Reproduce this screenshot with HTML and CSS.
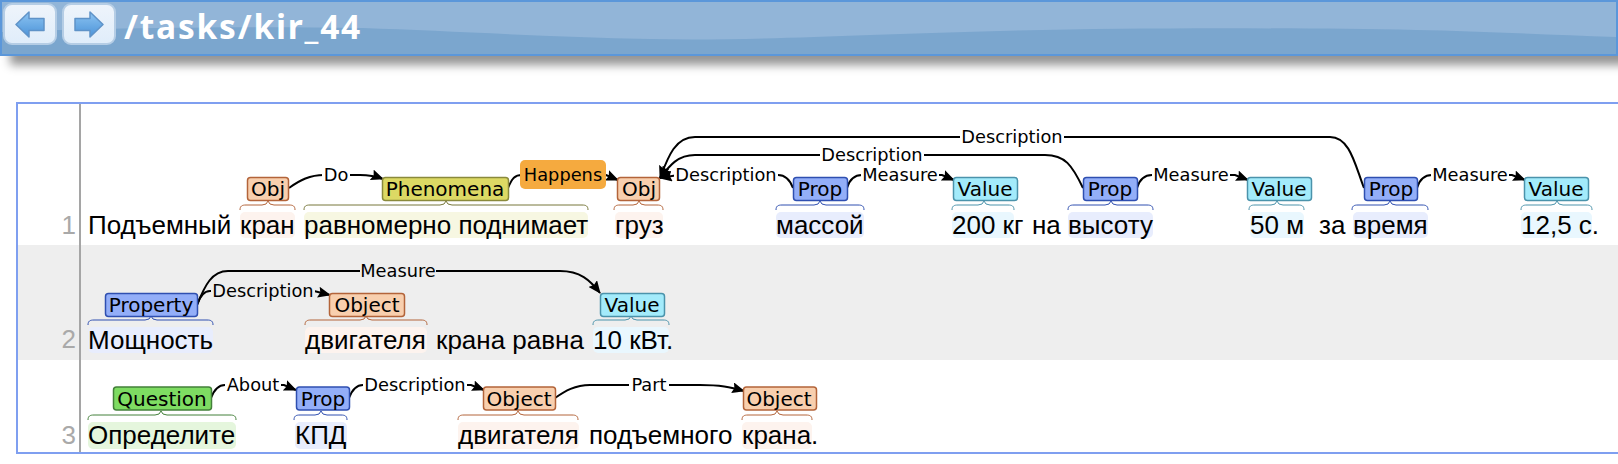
FILE: index.html
```html
<!DOCTYPE html>
<html lang="ru">
<head>
<meta charset="utf-8">
<title>/tasks/kir_44</title>
<link rel="stylesheet" href="styles.css">
</head>
<body>
<header class="bar">
  <svg class="gloss" viewBox="0 0 1618 52" preserveAspectRatio="none" aria-hidden="true"><path class="gloss-shape" d="M0 0H1618V35C1550 33 1480 29 1418 28 1300 26 1150 25 1000 29 850 33 750 39 650 37 550 35 450 29 362 26 240 24 100 26 0 30z"/></svg>
  <button class="nav" aria-label="back"><svg width="30" height="27" viewBox="0 0 30 27"><defs><linearGradient id="ag" x1="0" y1="0" x2="0" y2="1"><stop offset="0" stop-color="#8cc4f2"/><stop offset="1" stop-color="#4c93d8"/></linearGradient></defs><path class="arrow" d="M1 13.500 14 1v6.500h15v12H14V26z"/></svg></button>
  <button class="nav" aria-label="forward"><svg width="30" height="27" viewBox="0 0 30 27"><path class="arrow" d="M29 13.500 16 1v6.500H1v12h15V26z"/></svg></button>
  <h1 class="title">/tasks/kir_44</h1>
</header>
<main class="frame">
  <section class="row">
    <div class="num n1">1</div>
    <svg class="sent h1" viewBox="81 104 1537 141">
      <defs>
        <marker id="ah" markerWidth="13" markerHeight="11" refX="12" refY="5.500" orient="auto" markerUnits="userSpaceOnUse"><path d="M0 0 13 5.500 0 11 2 5.500z"/></marker>
      </defs>
      <rect class="hl o" x="240" y="212" width="55" height="26" rx="5"/>
      <rect class="hl y" x="304" y="212" width="284" height="26" rx="5"/>
      <rect class="hl o" x="615" y="212" width="48" height="26" rx="5"/>
      <rect class="hl b" x="776" y="212" width="88" height="26" rx="5"/>
      <rect class="hl c" x="952" y="212" width="62" height="26" rx="5"/>
      <rect class="hl b" x="1068" y="212" width="85" height="26" rx="5"/>
      <rect class="hl c" x="1250" y="212" width="54" height="26" rx="5"/>
      <rect class="hl b" x="1353" y="212" width="75" height="26" rx="5"/>
      <rect class="hl c" x="1521" y="212" width="71" height="26" rx="5"/>

      <path class="arc" d="M1364 188C1355 165 1350 137 1330 137H695C675 137 668 157 660 178" marker-end="url(#ah)"/>
      <path class="arc" d="M1083 188C1072 165 1065 155 1045 155H695C678 155 670 165 660 178" marker-end="url(#ah)"/>
      <path class="arc" d="M847 188C850 178 855 175 862 175H942L954 180" marker-end="url(#ah)"/>
      <path class="arc" d="M793 188C790 180 785 175 778 175H678L660 178" marker-end="url(#ah)"/>
      <path class="arc" d="M289 188C300 180 310 175 324 175H360C368 175 375 176 383 179" marker-end="url(#ah)"/>
      <path class="arc" d="M508 188C512 178 515 175 522 175H606L618 180" marker-end="url(#ah)"/>
      <path class="arc" d="M1137 188C1140 178 1145 175 1152 175H1235L1248 180" marker-end="url(#ah)"/>
      <path class="arc" d="M1417 188C1420 178 1425 175 1432 175H1512L1525 180" marker-end="url(#ah)"/>

      <rect class="gap" x="960" y="128" width="104" height="18"/><text class="lab" x="1012" y="136.500">Description</text>
      <rect class="gap" x="820" y="146" width="104" height="18"/><text class="lab" x="872" y="154.500">Description</text>
      <rect class="gap" x="674" y="166" width="104" height="18"/><text class="lab" x="726" y="174.500">Description</text>
      <rect class="gap" x="861" y="166" width="78" height="18"/><text class="lab" x="900" y="174.500">Measure</text>
      <rect class="gap" x="1152" y="166" width="78" height="18"/><text class="lab" x="1191" y="174.500">Measure</text>
      <rect class="gap" x="1431" y="166" width="78" height="18"/><text class="lab" x="1470" y="174.500">Measure</text>
      <rect class="gap" x="322" y="166" width="28" height="18"/><text class="lab" x="336" y="174.500">Do</text>

      <rect class="box bo" x="247.500" y="177.500" width="41" height="23" rx="3"/><text class="tag" x="268" y="189">Obj</text>
      <rect class="box by" x="382.500" y="177.500" width="126" height="23" rx="3"/><text class="tag" x="445" y="189">Phenomena</text>
      <rect class="box bg" x="520" y="160" width="86" height="29" rx="5"/><text class="lab" x="563" y="174.500">Happens</text>
      <rect class="box bo" x="617.500" y="177.500" width="42" height="23" rx="3"/><text class="tag" x="639" y="189">Obj</text>
      <rect class="box bb" x="793.500" y="177.500" width="54" height="23" rx="3"/><text class="tag" x="820" y="189">Prop</text>
      <rect class="box bc" x="953.500" y="177.500" width="64" height="23" rx="3"/><text class="tag" x="985" y="189">Value</text>
      <rect class="box bb" x="1083.500" y="177.500" width="54" height="23" rx="3"/><text class="tag" x="1110" y="189">Prop</text>
      <rect class="box bc" x="1247.500" y="177.500" width="64" height="23" rx="3"/><text class="tag" x="1279" y="189">Value</text>
      <rect class="box bb" x="1364.500" y="177.500" width="53" height="23" rx="3"/><text class="tag" x="1391" y="189">Prop</text>
      <rect class="box bc" x="1524.500" y="177.500" width="64" height="23" rx="3"/><text class="tag" x="1556" y="189">Value</text>

      <path class="brace so" d="M240 210C240 206 242 205 246 205H262Q267 205 268 201Q269 205 274 205H289C293 205 295 206 295 210"/>
      <path class="brace sy" d="M304 210C304 206 306 205 310 205H440Q445 205 446 201Q447 205 452 205H582C586 205 588 206 588 210"/>
      <path class="brace so" d="M614 210C614 206 616 205 620 205H633Q638 205 639 201Q640 205 645 205H657C661 205 663 206 663 210"/>
      <path class="brace sb" d="M776 210C776 206 778 205 782 205H814Q819 205 820 201Q821 205 826 205H858C862 205 864 206 864 210"/>
      <path class="brace sc" d="M952 210C952 206 954 205 958 205H978Q983 205 984 201Q985 205 990 205H1008C1012 205 1014 206 1014 210"/>
      <path class="brace sb" d="M1068 210C1068 206 1070 205 1074 205H1105Q1110 205 1111 201Q1112 205 1117 205H1147C1151 205 1153 206 1153 210"/>
      <path class="brace sc" d="M1249 210C1249 206 1251 205 1255 205H1271Q1276 205 1277 201Q1278 205 1283 205H1298C1302 205 1304 206 1304 210"/>
      <path class="brace sb" d="M1352 210C1352 206 1354 205 1358 205H1384Q1389 205 1390 201Q1391 205 1396 205H1422C1426 205 1428 206 1428 210"/>
      <path class="brace sc" d="M1521 210C1521 206 1523 205 1527 205H1551Q1556 205 1557 201Q1558 205 1563 205H1586C1590 205 1592 206 1592 210"/>

      <text class="word" x="88" y="234">Подъемный</text>
      <text class="word" x="240" y="234">кран</text>
      <text class="word" x="304" y="234">равномерно поднимает</text>
      <text class="word" x="615" y="234">груз</text>
      <text class="word" x="776" y="234">массой</text>
      <text class="word" x="952" y="234">200 кг</text>
      <text class="word" x="1032" y="234">на</text>
      <text class="word" x="1068" y="234">высоту</text>
      <text class="word" x="1250" y="234">50 м</text>
      <text class="word" x="1319" y="234">за</text>
      <text class="word" x="1353" y="234">время</text>
      <text class="word" x="1521" y="234">12,5 с.</text>
    </svg>
  </section>
  <section class="row alt">
    <div class="num n2">2</div>
    <svg class="sent h2" viewBox="81 245 1537 115">
      <rect class="hl b" x="88" y="327" width="125" height="26" rx="5"/>
      <rect class="hl o" x="305" y="327" width="122" height="26" rx="5"/>
      <rect class="hl c" x="593" y="327" width="76" height="26" rx="5"/>

      <path class="arc" d="M197 305C205 285 212 271 228 271H560C580 271 590 280 600 293" marker-end="url(#ah)"/>
      <path class="arc" d="M197 305C200 296 204 291 210 291H314L330 295" marker-end="url(#ah)"/>
      <rect class="gap altgap" x="360" y="262" width="76" height="18"/><text class="lab" x="398" y="270.500">Measure</text>
      <rect class="gap altgap" x="211" y="282" width="104" height="18"/><text class="lab" x="263" y="290.500">Description</text>

      <rect class="box bb" x="105.500" y="293.500" width="92" height="23" rx="3"/><text class="tag" x="151" y="305">Property</text>
      <rect class="box bo" x="329.500" y="293.500" width="75" height="23" rx="3"/><text class="tag" x="367" y="305">Object</text>
      <rect class="box bc" x="600.500" y="293.500" width="64" height="23" rx="3"/><text class="tag" x="632" y="305">Value</text>

      <path class="brace sb" d="M88 325C88 321 90 320 94 320H145Q150 320 151 316Q152 320 157 320H207C211 320 213 321 213 325"/>
      <path class="brace so" d="M305 325C305 321 307 320 311 320H360Q365 320 366 316Q367 320 372 320H421C425 320 427 321 427 325"/>
      <path class="brace sc" d="M593 325C593 321 595 320 599 320H625Q630 320 631 316Q632 320 637 320H663C667 320 669 321 669 325"/>

      <text class="word" x="88" y="348.500">Мощность</text>
      <text class="word" x="305" y="348.500">двигателя</text>
      <text class="word" x="436" y="348.500">крана равна</text>
      <text class="word" x="593" y="348.500">10 кВт.</text>
    </svg>
  </section>
  <section class="row">
    <div class="num n3">3</div>
    <svg class="sent h3" viewBox="81 360 1537 92">
      <rect class="hl g" x="88" y="422" width="148" height="27" rx="5"/>
      <rect class="hl b" x="295" y="422" width="52" height="27" rx="5"/>
      <rect class="hl o" x="458" y="422" width="121" height="27" rx="5"/>
      <rect class="hl o" x="742" y="422" width="70" height="27" rx="5"/>

      <path class="arc" d="M211 398C214 390 218 385 225 385H284L296 390" marker-end="url(#ah)"/>
      <path class="arc" d="M349 398C352 390 356 385 363 385H471L484 390" marker-end="url(#ah)"/>
      <path class="arc" d="M555 398C565 391 575 385 590 385H700C720 385 730 387 744 391" marker-end="url(#ah)"/>
      <rect class="gap" x="225" y="376" width="56" height="18"/><text class="lab" x="253" y="384.500">About</text>
      <rect class="gap" x="363" y="376" width="104" height="18"/><text class="lab" x="415" y="384.500">Description</text>
      <rect class="gap" x="629" y="376" width="40" height="18"/><text class="lab" x="649" y="384.500">Part</text>

      <rect class="box bg2" x="113.500" y="387" width="98" height="23" rx="3"/><text class="tag" x="162" y="398.500">Question</text>
      <rect class="box bb" x="296.500" y="387" width="53" height="23" rx="3"/><text class="tag" x="323" y="398.500">Prop</text>
      <rect class="box bo" x="483.500" y="387" width="72" height="23" rx="3"/><text class="tag" x="519" y="398.500">Object</text>
      <rect class="box bo" x="743.500" y="387" width="73" height="23" rx="3"/><text class="tag" x="779" y="398.500">Object</text>

      <path class="brace sg" d="M88 420C88 416 90 415 94 415H155Q160 415 161 411Q162 415 167 415H230C234 415 236 416 236 420"/>
      <path class="brace sb" d="M294 420C294 416 296 415 300 415H315Q320 415 321 411Q322 415 327 415H341C345 415 347 416 347 420"/>
      <path class="brace so" d="M458 420C458 416 460 415 464 415H512Q517 415 518 411Q519 415 524 415H572C576 415 578 416 578 420"/>
      <path class="brace so" d="M742 420C742 416 744 415 748 415H771Q776 415 777 411Q778 415 783 415H806C810 415 812 416 812 420"/>

      <text class="word" x="88" y="444">Определите</text>
      <text class="word" x="295" y="444">КПД</text>
      <text class="word" x="458" y="444">двигателя</text>
      <text class="word" x="589" y="444">подъемного</text>
      <text class="word" x="742" y="444">крана.</text>
    </svg>
  </section>
</main>
</body>
</html>
```
FILE: styles.css
```css
* { box-sizing: border-box; }
html, body { margin: 0; padding: 0; background: #fff; }
body { width: 1618px; height: 464px; overflow: hidden; font-family: "Liberation Sans", sans-serif; }

.bar {
  position: relative;
  height: 56px;
  display: flex;
  align-items: flex-start;
  gap: 5px;
  padding: 1px;
  border: 2px solid #5b97da;
  background: #7ba6ce;
  box-shadow: 10px 9px 9px rgba(0, 0, 0, 0.42);
}
.gloss { position: absolute; left: 0; top: 0; width: 100%; height: 100%; }
.gloss-shape { fill: #92b5d8; }
.nav {
  position: relative;
  width: 54px;
  height: 42px;
  padding: 0;
  display: flex;
  align-items: center;
  justify-content: center;
  border: 2px solid #b5cde5;
  border-radius: 9px;
  background: linear-gradient(#eef4fb, #e0edfa);
}
.arrow { fill: url(#ag); stroke: #5f93c8; stroke-width: 1.500; stroke-linejoin: round; }
.title {
  position: relative;
  margin: 0 0 0 3px;
  color: #fff;
  font: bold 33.500px/46px "Noto Sans", sans-serif;
  letter-spacing: 1.800px;
}

.frame {
  margin: 46px 0 0 16px;
  width: 1602px;
  height: 352px;
  border: 2px solid #7f9ff0;
  border-right: 0;
}
.row { display: flex; }
.alt { background: #eee; }
.num {
  width: 63px;
  flex: none;
  border-right: 2px solid #a5a5a5;
  padding-right: 3px;
  display: flex;
  align-items: flex-end;
  justify-content: flex-end;
  color: #a9a9a9;
  font-size: 26px;
  line-height: 26px;
}
.n1 { padding-bottom: 7px; }
.n2 { padding-bottom: 8px; }
.n3 { padding-bottom: 4px; }
.sent { display: block; width: 1537px; flex: none; }
.h1 { height: 141px; }
.h2 { height: 115px; }
.h3 { height: 92px; }

.word { font: 26px "Liberation Sans", sans-serif; fill: #000; }
.lab { font: 17.800px "DejaVu Sans", sans-serif; fill: #000; text-anchor: middle; dominant-baseline: central; }
.tag { font: 20px "DejaVu Sans", sans-serif; fill: #000; text-anchor: middle; dominant-baseline: central; }

.hl { stroke: none; }
.hl.o { fill: #fdf3ee; }
.hl.y { fill: #f7f7e2; }
.hl.b { fill: #e8edfd; }
.hl.c { fill: #e9f7fe; }
.hl.g { fill: #e5f6dd; }

.box { stroke-width: 1.500; }
.bo { fill: #f8cfae; stroke: #b3643a; }
.by { fill: #dcd964; stroke: #8a8a3c; }
.bg { fill: #f5aa3f; stroke: none; }
.bb { fill: #93aef8; stroke: #2f4fb0; }
.bc { fill: #a3ebfb; stroke: #4b93ab; }
.bg2 { fill: #7edc62; stroke: #43803a; }

.arc { fill: none; stroke: #000; stroke-width: 2; }
.gap { fill: #fff; }
.altgap { fill: #eee; }

.brace { fill: none; stroke-width: 1; }
.so { stroke: #b3643a; }
.sy { stroke: #77773a; }
.sb { stroke: #2f4fb0; }
.sc { stroke: #4b93ab; }
.sg { stroke: #43803a; }
```
